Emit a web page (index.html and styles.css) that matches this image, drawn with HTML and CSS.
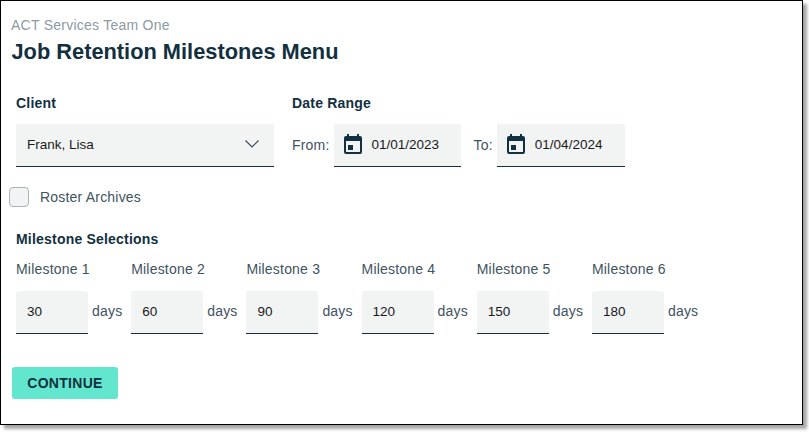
FILE: index.html
```html
<!DOCTYPE html>
<html lang="en">
<head>
<meta charset="utf-8">
<title>Job Retention Milestones Menu</title>
<link rel="stylesheet" href="styles.css">
</head>
<body>
<main class="panel">
  <p class="team">ACT Services Team One</p>
  <h1 class="title">Job Retention Milestones Menu</h1>
  <div class="top-row">
    <section class="client">
      <h2 class="label">Client</h2>
      <div class="field select">
        <span>Frank, Lisa</span>
        <svg class="chevron" viewBox="0 0 16 10" width="16" height="10"><path d="M1.500 1.500 8 8l6.500-6.500" fill="none" stroke="#3a4e5a" stroke-width="1.200"/></svg>
      </div>
    </section>
    <section class="dates">
      <h2 class="label">Date Range</h2>
      <div class="date-row">
        <span class="muted from">From:</span>
        <div class="field date">
          <svg class="cal" viewBox="0 0 24 24" width="24" height="24"><path fill="#12303f" d="M19 4h-1V2h-2v2H8V2H6v2H5a2 2 0 0 0-2 2v14a2 2 0 0 0 2 2h14a2 2 0 0 0 2-2V6a2 2 0 0 0-2-2zm0 16H5V9h14v11zM7 13h5v5H7z"/></svg>
          <span>01/01/2023</span>
        </div>
        <span class="muted to">To:</span>
        <div class="field date">
          <svg class="cal" viewBox="0 0 24 24" width="24" height="24"><path fill="#12303f" d="M19 4h-1V2h-2v2H8V2H6v2H5a2 2 0 0 0-2 2v14a2 2 0 0 0 2 2h14a2 2 0 0 0 2-2V6a2 2 0 0 0-2-2zm0 16H5V9h14v11zM7 13h5v5H7z"/></svg>
          <span>01/04/2024</span>
        </div>
      </div>
    </section>
  </div>
  <div class="roster">
    <span class="box"></span>
    <span class="muted">Roster Archives</span>
  </div>
  <h2 class="label sel">Milestone Selections</h2>
  <div class="milestones">
    <div class="ms"><span class="muted">Milestone 1</span><div class="ms-row"><div class="field num">30</div><span class="muted">days</span></div></div>
    <div class="ms"><span class="muted">Milestone 2</span><div class="ms-row"><div class="field num">60</div><span class="muted">days</span></div></div>
    <div class="ms"><span class="muted">Milestone 3</span><div class="ms-row"><div class="field num">90</div><span class="muted">days</span></div></div>
    <div class="ms"><span class="muted">Milestone 4</span><div class="ms-row"><div class="field num">120</div><span class="muted">days</span></div></div>
    <div class="ms"><span class="muted">Milestone 5</span><div class="ms-row"><div class="field num">150</div><span class="muted">days</span></div></div>
    <div class="ms"><span class="muted">Milestone 6</span><div class="ms-row"><div class="field num">180</div><span class="muted">days</span></div></div>
  </div>
  <button class="continue" type="button">CONTINUE</button>
</main>
</body>
</html>
```

FILE: styles.css
```css
* { box-sizing: border-box; }
html, body { margin: 0; background: #fff; }
body {
  width: 809px;
  height: 432px;
  overflow: hidden;
  font-family: "Liberation Sans", Arial, sans-serif;
  font-size: 14px;
  letter-spacing: 0.2px;
  color: #12303f;
}
.panel {
  width: 803px;
  height: 425px;
  border: 1px solid #000;
  box-shadow: 4px 4px 3px rgba(0, 0, 0, 0.35);
  padding: 16px 11px 0 10px;
  background: #fff;
}
.team { margin: 0; font-size: 14px; line-height: 17px; letter-spacing: 0.25px; color: #8c9aa3; }
.title { margin: 5px 0 0 0.500px; font-size: 21.800px; line-height: 26px; font-weight: 700; letter-spacing: 0; color: #12303f; }
.label { margin: 0; font-size: 14px; line-height: 16px; font-weight: 700; letter-spacing: 0.2px; color: #12303f; }
.top-row { display: flex; margin: 30px 0 0 5px; gap: 18px; }
.client { width: 258px; }
.field {
  display: flex;
  align-items: center;
  background: #f2f4f4;
  border-bottom: 1px solid #12303f;
  border-radius: 2px 2px 0 0;
  color: #1a1a1a;
  font-size: 13.500px;
  letter-spacing: 0;
  padding-bottom: 2px;
}
.select { margin-top: 13px; height: 43px; padding-right: 14px; padding-left: 11px; justify-content: space-between; }
.date-row { display: flex; align-items: center; margin-top: 13px; }
.date { height: 43px; width: 127px; padding-left: 7px; gap: 7px; }
.date + .to { margin-left: 13px; }
.from { margin-right: 4px; margin-bottom: 2px; }
.to { margin-right: 4px; margin-bottom: 2px; }
.date:last-child { width: 128px; }
.muted { color: #40535f; }
.roster { display: flex; align-items: center; gap: 11px; margin: 20px 0 0 -2px; height: 20px; }
.box { width: 20px; height: 20px; border: 1px solid #a8b4ba; border-radius: 4px; background: #f2f4f4; }
.sel { margin: 24px 0 0 5px; }
.milestones { display: flex; margin: 14px 0 0 5px; }
.ms { width: 115.200px; display: flex; flex-direction: column; }
.ms > .muted { line-height: 17px; }
.ms-row { display: flex; align-items: center; gap: 4px; margin-top: 13px; }
.ms-row > .muted { margin-bottom: 3px; }
.num { width: 72px; height: 43px; padding-left: 11px; }
.continue {
  display: block;
  margin: 33px 0 0 1px;
  width: 106px;
  height: 32px;
  border: 0;
  border-radius: 3px;
  background: #62e6cd;
  color: #12303f;
  font: 700 14px "Liberation Sans", Arial, sans-serif;
  letter-spacing: 0.3px;
  padding: 0;
}
```
